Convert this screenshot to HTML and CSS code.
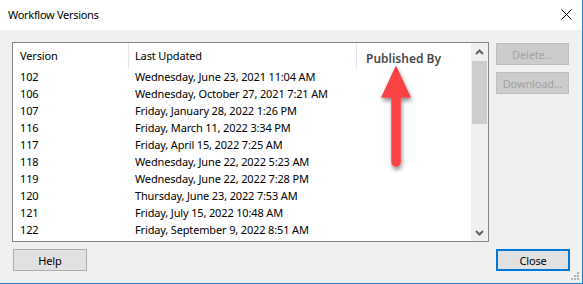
FILE: index.html
```html
<!DOCTYPE html>
<html>
<head>
<meta charset="utf-8">
<link rel="stylesheet" href="styles.css">
</head>
<body>
<div class="window">
  <div class="titlebar">
    <span class="title">Workflow Versions</span>
    <svg class="close-x" width="11" height="11" viewBox="0 0 11 11"><path d="M0.5 0.5 L10.5 10.5 M10.5 0.5 L0.5 10.5" stroke="#000" stroke-width="1" fill="none"/></svg>
  </div>
  <div class="content">
    <div class="main-row">
      <div class="list">
        <div class="table">
          <div class="header">
            <div class="col c1">Version</div>
            <div class="col c2">Last Updated</div>
            <div class="col c3"><span class="published">Published By</span></div>
          </div>
          <div class="row"><span class="c1">102</span><span class="c2">Wednesday, June 23, 2021 11:04 AM</span></div>
          <div class="row"><span class="c1">106</span><span class="c2">Wednesday, October 27, 2021 7:21 AM</span></div>
          <div class="row"><span class="c1">107</span><span class="c2">Friday, January 28, 2022 1:26 PM</span></div>
          <div class="row"><span class="c1">116</span><span class="c2">Friday, March 11, 2022 3:34 PM</span></div>
          <div class="row"><span class="c1">117</span><span class="c2">Friday, April 15, 2022 7:25 AM</span></div>
          <div class="row"><span class="c1">118</span><span class="c2">Wednesday, June 22, 2022 5:23 AM</span></div>
          <div class="row"><span class="c1">119</span><span class="c2">Wednesday, June 22, 2022 7:28 PM</span></div>
          <div class="row"><span class="c1">120</span><span class="c2">Thursday, June 23, 2022 7:53 AM</span></div>
          <div class="row"><span class="c1">121</span><span class="c2">Friday, July 15, 2022 10:48 AM</span></div>
          <div class="row"><span class="c1">122</span><span class="c2">Friday, September 9, 2022 8:51 AM</span></div>
        </div>
        <div class="scrollbar">
          <div class="sb-btn"><svg width="9" height="6" viewBox="0 0 9 6"><path d="M1 5 L4.5 1.5 L8 5" stroke="#606060" stroke-width="2" fill="none"/></svg></div>
          <div class="thumb"></div>
          <div class="sb-track"></div>
          <div class="sb-btn"><svg width="9" height="6" viewBox="0 0 9 6"><path d="M1 1 L4.5 4.5 L8 1" stroke="#606060" stroke-width="2" fill="none"/></svg></div>
        </div>
        <svg class="arrow" width="44" height="110" viewBox="0 0 44 110">
          <defs>
            <filter id="sh" x="-50%" y="-20%" width="200%" height="150%">
              <feGaussianBlur in="SourceAlpha" stdDeviation="2"/>
              <feOffset dx="1" dy="3"/>
              <feComponentTransfer><feFuncA type="linear" slope="0.45"/></feComponentTransfer>
              <feMerge><feMergeNode/><feMergeNode in="SourceGraphic"/></feMerge>
            </filter>
          </defs>
          <g filter="url(#sh)">
            <path d="M19 2 L33 32 L5 32 Z" fill="#fb4345" stroke="#fb4345" stroke-width="1.5" stroke-linejoin="round"/>
            <path d="M19 30 L19 97" stroke="#fb4345" stroke-width="9.5" stroke-linecap="round"/>
          </g>
        </svg>
      </div>
      <div class="side-buttons">
        <div class="btn disabled">Delete...</div>
        <div class="btn disabled">Download...</div>
      </div>
    </div>
    <div class="bottom-row">
      <div class="btn help">Help</div>
      <div class="btn close">Close</div>
    </div>
    <svg class="grip" width="9" height="9" viewBox="0 0 9 9">
      <rect x="6" y="0" width="2" height="2" fill="#b8b8b8"/>
      <rect x="3" y="3" width="2" height="2" fill="#b8b8b8"/>
      <rect x="6" y="3" width="2" height="2" fill="#b8b8b8"/>
      <rect x="0" y="6" width="2" height="2" fill="#b8b8b8"/>
      <rect x="3" y="6" width="2" height="2" fill="#b8b8b8"/>
      <rect x="6" y="6" width="2" height="2" fill="#b8b8b8"/>
    </svg>
  </div>
</div>
</body>
</html>
```
FILE: styles.css
```css
html, body {
  margin: 0;
  padding: 0;
  background: #ffffff;
}
body {
  font-family: "Noto Sans", "Open Sans", sans-serif;
  font-size: 11px;
  letter-spacing: -0.15px;
  color: #000;
}
.window {
  width: 582px;
  height: 283px;
  border-right: 1px solid #1883d7;
  border-bottom: 1px solid #1883d7;
  display: flex;
  flex-direction: column;
  background: #f0f0f0;
  overflow: hidden;
}
.titlebar {
  height: 30px;
  background: #ffffff;
  display: flex;
  align-items: center;
  justify-content: space-between;
  padding: 0 10px 0 8px;
  flex-shrink: 0;
}
.title {
  font-size: 11px;
  letter-spacing: -0.3px;
  color: #000;
  padding-bottom: 1px;
}
.close-x {
  display: block;
  margin-bottom: 1px;
}
.content {
  position: relative;
  flex: 1;
  padding: 12px 0 0 12px;
}
.main-row {
  display: flex;
  gap: 7px;
}
.list {
  position: relative;
  width: 475px;
  height: 198px;
  border: 1px solid #828790;
  background: #fff;
  display: flex;
}
.table {
  flex: 1;
  overflow: hidden;
}
.header {
  display: flex;
  height: 25px;
  line-height: 24px;
}
.header .col {
  box-sizing: border-box;
  border-right: 1px solid #e5e5e5;
  margin: 1px 0 0;
}
.c1 {
  width: 116px;
  padding-left: 7px;
  box-sizing: border-box;
  flex-shrink: 0;
}
.c2 {
  width: 228px;
  padding-left: 6px;
  box-sizing: border-box;
  flex-shrink: 0;
}
.header .c3 {
  border-right: none;
  padding-left: 9px;
  flex: 1;
}
.published {
  font-size: 12px;
  font-weight: 600;
  letter-spacing: 0;
  color: #4a4a4a;
  position: relative;
  top: 3px;
}
.row {
  display: flex;
  height: 17px;
  line-height: 17px;
  white-space: nowrap;
}
.scrollbar {
  width: 17px;
  background: #f0f0f0;
  display: flex;
  flex-direction: column;
  flex-shrink: 0;
}
.sb-btn {
  height: 17px;
  display: flex;
  align-items: center;
  justify-content: center;
}
.thumb {
  height: 63px;
  margin: 1px 1px 0;
  background: #cdcdcd;
}
.sb-track {
  flex: 1;
}
.side-buttons {
  display: flex;
  flex-direction: column;
  gap: 7px;
  margin-top: 1px;
}
.btn {
  box-sizing: border-box;
  width: 73px;
  height: 22px;
  display: flex;
  align-items: center;
  justify-content: center;
  border: 1px solid #adadad;
  background: #e1e1e1;
  color: #000;
}
.btn.disabled {
  background: #cccccc;
  border-color: #bfbfbf;
  color: #a3a3a3;
}
.bottom-row {
  display: flex;
  justify-content: space-between;
  margin-top: 7px;
  padding-left: 1px;
  width: 557px;
}
.help {
  width: 74px;
}
.close {
  width: 74px;
  border: 2px solid #0078d7;
}
.arrow {
  position: absolute;
  left: 364px;
  top: 22px;
}
.grip {
  position: absolute;
  right: 2px;
  bottom: 2px;
}
```
